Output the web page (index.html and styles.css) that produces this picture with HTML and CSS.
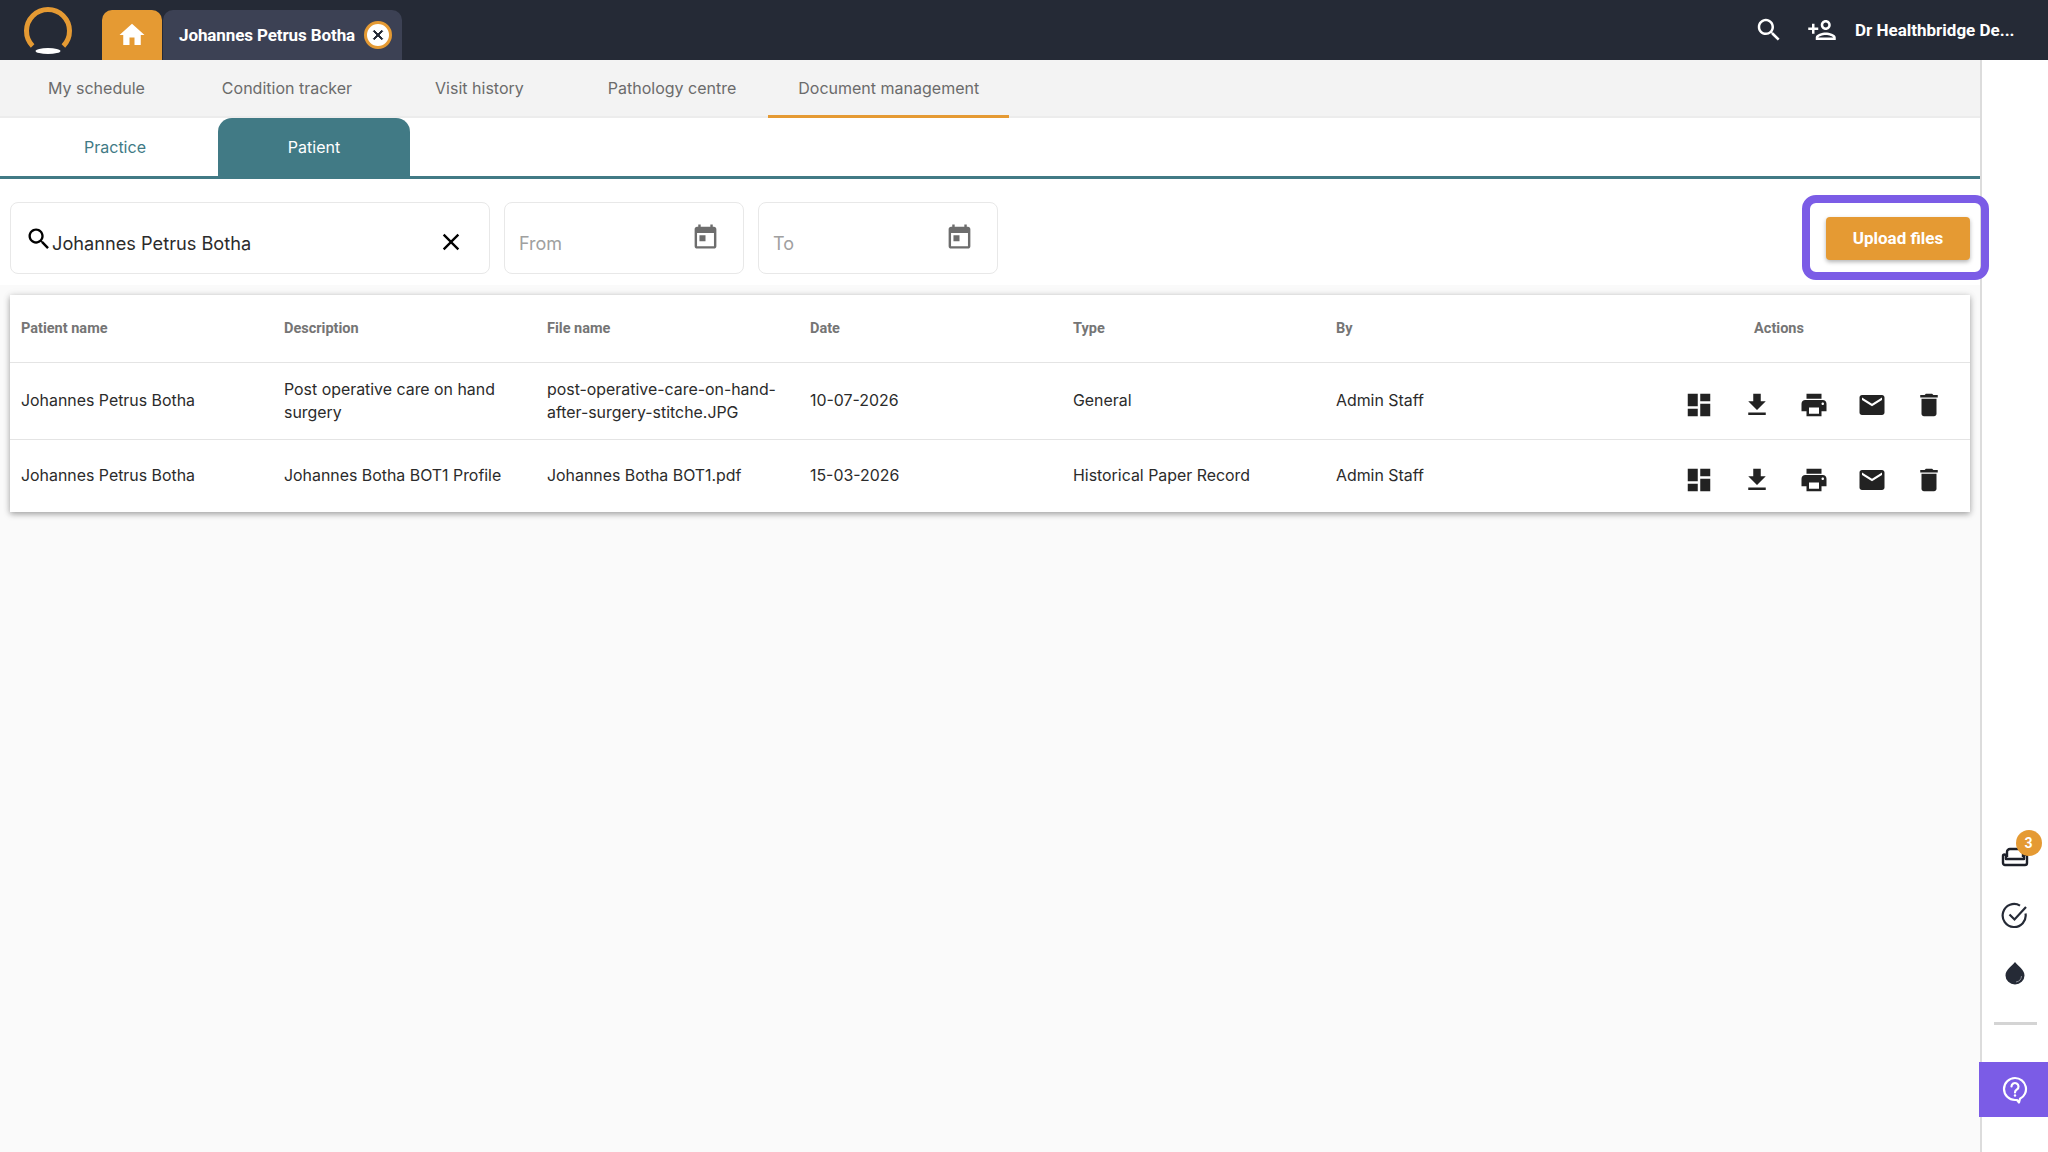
FILE: index.html

```html
<!DOCTYPE html>
<html lang="en">
<head>
    <meta charset="UTF-8">
    <title>Document management</title>
    <link rel="stylesheet" href="styles.css">
</head>
<body>
    <header class="topbar">
        <svg class="logo" width="56" height="60" viewBox="0 0 56 60">
            <path d="M12.600 46 A21.500 21.500 0 1 1 43.400 46" fill="none" stroke="#e59a33" stroke-width="5"/>
            <ellipse cx="28" cy="51" rx="12.5" ry="3" fill="#fff"/>
        </svg>
        <a class="home-tab" href="#">
            <svg width="30" height="30" viewBox="0 0 24 24"><path d="M10 20v-6h4v6h5v-8h3L12 3 2 12h3v8z"/></svg>
        </a>
        <div class="patient-tab">
            <span>Johannes Petrus Botha</span>
            <span class="patient-close">
                <svg width="16" height="16" viewBox="0 0 24 24"><path d="M19 6.41L17.59 5 12 10.59 6.41 5 5 6.41 10.59 12 5 17.59 6.41 19 12 13.41 17.59 19 19 17.59 13.41 12z"/></svg>
            </span>
        </div>
        <div class="topbar-right">
            <svg width="30" height="30" viewBox="0 0 24 24"><path d="M15.5 14h-.79l-.28-.27C15.41 12.59 16 11.11 16 9.5 16 5.91 13.09 3 9.5 3S3 5.91 3 9.5 5.91 16 9.5 16c1.61 0 3.09-.59 4.23-1.57l.27.28v.79l5 4.99L20.49 19l-4.99-5zm-6 0C7.01 14 5 11.99 5 9.5S7.01 5 9.5 5 14 7.01 14 9.5 11.99 14 9.5 14z"/></svg>
            <svg class="add-person" width="30" height="30" viewBox="0 0 24 24"><path d="M15 12c2.21 0 4-1.79 4-4s-1.79-4-4-4-4 1.79-4 4 1.79 4 4 4zm0-6c1.1 0 2 .9 2 2s-.9 2-2 2-2-.9-2-2 .9-2 2-2zm0 8c-2.67 0-8 1.34-8 4v2h16v-2c0-2.66-5.33-4-8-4zm-6 4c.22-.72 3.31-2 6-2 2.7 0 5.8 1.29 6 2H9zm-3-3v-3h3v-2H6V7H4v3H1v2h3v3h2z"/></svg>
            <span class="user-name">Dr Healthbridge De...</span>
        </div>
    </header>

    <div class="layout">
        <main class="main">
            <nav class="nav-tabs">
                <a href="#">My schedule</a>
                <a href="#">Condition tracker</a>
                <a href="#">Visit history</a>
                <a href="#">Pathology centre</a>
                <a href="#" class="active">Document management</a>
            </nav>

            <div class="sub-tabs">
                <a href="#">Practice</a>
                <a href="#" class="active">Patient</a>
            </div>

            <section class="filters">
                <div class="field field-search">
                    <svg class="field-search-icon" width="28" height="28" viewBox="0 0 24 24"><path d="M15.5 14h-.79l-.28-.27C15.41 12.59 16 11.11 16 9.5 16 5.91 13.09 3 9.5 3S3 5.91 3 9.5 5.91 16 9.5 16c1.61 0 3.09-.59 4.23-1.57l.27.28v.79l5 4.99L20.49 19l-4.99-5zm-6 0C7.01 14 5 11.99 5 9.5S7.01 5 9.5 5 14 7.01 14 9.5 11.99 14 9.5 14z"/></svg>
                    <span class="field-value">Johannes Petrus Botha</span>
                    <svg class="field-clear" width="28" height="28" viewBox="0 0 24 24"><path d="M19 6.41L17.59 5 12 10.59 6.41 5 5 6.41 10.59 12 5 17.59 6.41 19 12 13.41 17.59 19 19 17.59 13.41 12z"/></svg>
                </div>
                <div class="field field-date">
                    <span class="field-placeholder">From</span>
                    <svg class="calendar" width="29" height="29" viewBox="0 0 24 24"><path d="M19 4h-1V2h-2v2H8V2H6v2H5c-1.11 0-2 .9-2 2v14c0 1.1.89 2 2 2h14c1.1 0 2-.9 2-2V6c0-1.1-.9-2-2-2zm0 16H5V9h14v11zM7 11h5v5H7z"/></svg>
                </div>
                <div class="field field-date">
                    <span class="field-placeholder">To</span>
                    <svg class="calendar" width="29" height="29" viewBox="0 0 24 24"><path d="M19 4h-1V2h-2v2H8V2H6v2H5c-1.11 0-2 .9-2 2v14c0 1.1.89 2 2 2h14c1.1 0 2-.9 2-2V6c0-1.1-.9-2-2-2zm0 16H5V9h14v11zM7 11h5v5H7z"/></svg>
                </div>
                <div class="upload-wrap">
                    <button class="upload-button">Upload files</button>
                    <div class="highlight"></div>
                </div>
            </section>

            <section class="content">
                <table class="documents">
                    <thead>
                        <tr>
                            <th>Patient name</th>
                            <th>Description</th>
                            <th>File name</th>
                            <th>Date</th>
                            <th>Type</th>
                            <th>By</th>
                            <th class="actions-head">Actions</th>
                        </tr>
                    </thead>
                    <tbody>
                        <tr class="row-tall">
                            <td>Johannes Petrus Botha</td>
                            <td>Post operative care on hand surgery</td>
                            <td>post-operative-care-on-hand-after-surgery-stitche.JPG</td>
                            <td>10-07-2026</td>
                            <td>General</td>
                            <td>Admin Staff</td>
                            <td>
                                <div class="actions">
                                    <svg viewBox="0 0 24 24"><path d="M3 13h8V3H3v10zm0 8h8v-6H3v6zm10 0h8V11h-8v10zm0-18v6h8V3h-8z"/></svg>
                                    <svg viewBox="0 0 24 24"><path d="M19 9h-4V3H9v6H5l7 7 7-7zM5 18v2h14v-2H5z"/></svg>
                                    <svg viewBox="0 0 24 24"><path d="M19 8H5c-1.66 0-3 1.34-3 3v6h4v4h12v-4h4v-6c0-1.66-1.34-3-3-3zm-3 11H8v-5h8v5zm3-7c-.55 0-1-.45-1-1s.45-1 1-1 1 .45 1 1-.45 1-1 1zm-1-9H6v4h12V3z"/></svg>
                                    <svg viewBox="0 0 24 24"><path d="M20 4H4c-1.1 0-1.99.9-1.99 2L2 18c0 1.1.9 2 2 2h16c1.1 0 2-.9 2-2V6c0-1.1-.9-2-2-2zm0 4l-8 5-8-5V6l8 5 8-5v2z"/></svg>
                                    <svg viewBox="0 0 24 24"><path d="M6 19c0 1.1.9 2 2 2h8c1.1 0 2-.9 2-2V7H6v12zM19 4h-3.5l-1-1h-5l-1 1H5v2h14V4z"/></svg>
                                </div>
                            </td>
                        </tr>
                        <tr class="row-short">
                            <td>Johannes Petrus Botha</td>
                            <td>Johannes Botha BOT1 Profile</td>
                            <td>Johannes Botha BOT1.pdf</td>
                            <td>15-03-2026</td>
                            <td>Historical Paper Record</td>
                            <td>Admin Staff</td>
                            <td>
                                <div class="actions">
                                    <svg viewBox="0 0 24 24"><path d="M3 13h8V3H3v10zm0 8h8v-6H3v6zm10 0h8V11h-8v10zm0-18v6h8V3h-8z"/></svg>
                                    <svg viewBox="0 0 24 24"><path d="M19 9h-4V3H9v6H5l7 7 7-7zM5 18v2h14v-2H5z"/></svg>
                                    <svg viewBox="0 0 24 24"><path d="M19 8H5c-1.66 0-3 1.34-3 3v6h4v4h12v-4h4v-6c0-1.66-1.34-3-3-3zm-3 11H8v-5h8v5zm3-7c-.55 0-1-.45-1-1s.45-1 1-1 1 .45 1 1-.45 1-1 1zm-1-9H6v4h12V3z"/></svg>
                                    <svg viewBox="0 0 24 24"><path d="M20 4H4c-1.1 0-1.99.9-1.99 2L2 18c0 1.1.9 2 2 2h16c1.1 0 2-.9 2-2V6c0-1.1-.9-2-2-2zm0 4l-8 5-8-5V6l8 5 8-5v2z"/></svg>
                                    <svg viewBox="0 0 24 24"><path d="M6 19c0 1.1.9 2 2 2h8c1.1 0 2-.9 2-2V7H6v12zM19 4h-3.5l-1-1h-5l-1 1H5v2h14V4z"/></svg>
                                </div>
                            </td>
                        </tr>
                    </tbody>
                </table>
            </section>
        </main>

        <aside class="rail">
            <div class="rail-item rail-inbox">
                <svg width="28" height="20" viewBox="0 0 28 20" fill="none" stroke="#1d2029" stroke-width="2.4" stroke-linejoin="round">
                    <path d="M6 10V5a3 3 0 0 1 3-3h10a3 3 0 0 1 3 3v5"/>
                    <path d="M2 9a1.500 1.500 0 0 1 3 0v3h18V9a1.500 1.500 0 0 1 3 0v7a2 2 0 0 1-2 2H4a2 2 0 0 1-2-2z"/>
                </svg>
                <span class="rail-badge">3</span>
            </div>
            <div class="rail-item rail-check">
                <svg width="28" height="28" viewBox="0 0 28 28" fill="none" stroke="#252a36" stroke-width="2.2">
                    <path d="M24.500 11.500A11.500 11.500 0 1 1 19 3.600"/>
                    <path d="M8.500 12.500l5 5L25 5"/>
                </svg>
            </div>
            <div class="rail-item rail-drop">
                <svg width="22" height="24" viewBox="0 0 22 24">
                    <path d="M11 1c3 4 9.500 7.500 9.500 13.500a9.500 9 0 0 1-19 0C1.500 8.500 8 5 11 1z" fill="#252a36"/>
                    <path d="M17.500 15a6.500 6.500 0 0 1-5.500 6" fill="none" stroke="#8a8d96" stroke-width="1"/>
                </svg>
            </div>
            <div class="rail-divider"></div>
            <div class="rail-help">
                <svg width="26" height="28" viewBox="0 0 26 28" fill="none" stroke="#fff" stroke-width="2.2">
                    <path d="M13 2a11 11 0 1 0 0 22h2l2 2.500 1-3.700A11 11 0 0 0 13 2z" stroke-linejoin="round"/>
                    <path d="M9.500 10.500a3.500 3.500 0 1 1 5.500 2.900c-1.300.9-2 1.500-2 3.100" stroke-linecap="round"/>
                    <circle cx="13" cy="19.500" r="1.200" fill="#fff" stroke="none"/>
                </svg>
            </div>
        </aside>
    </div>
</body>
</html>
```

FILE: styles.css

```css
:root {
    --dark: #252a36;
    --orange: #e59a33;
    --teal: #417a85;
    --purple: #7b5ce6;
    --line: #e4e4e4;
    --text: #2b2b2b;
}

* {
    box-sizing: border-box;
}

body {
    margin: 0;
    height: 1152px;
    overflow: hidden;
    display: flex;
    flex-direction: column;
    font-family: Inter, "Noto Sans", sans-serif;
    color: var(--text);
    background-color: #fff;
}

a {
    text-decoration: none;
    color: inherit;
}

.topbar {
    height: 60px;
    flex-shrink: 0;
    display: flex;
    align-items: flex-end;
    padding-left: 20px;
    background-color: var(--dark);
    color: #fff;
}

.logo {
    margin-right: 26px;
}

.home-tab {
    width: 60px;
    height: 50px;
    display: flex;
    align-items: center;
    justify-content: center;
    margin-right: 1px;
    border-radius: 10px 10px 0 0;
    background-color: var(--orange);
}

.home-tab svg {
    fill: #fff;
}

.patient-tab {
    width: 239px;
    height: 50px;
    display: flex;
    align-items: center;
    gap: 9px;
    padding-left: 16px;
    border-radius: 10px 10px 0 0;
    background-color: #3c4154;
    font-family: Roboto, sans-serif;
    font-size: 17px;
    font-weight: 700;
    letter-spacing: -0.1px;
}

.patient-close {
    width: 28px;
    height: 28px;
    display: flex;
    align-items: center;
    justify-content: center;
    border: 3px solid var(--orange);
    border-radius: 50%;
    background-color: #fff;
}

.patient-close svg {
    fill: var(--dark);
    stroke: var(--dark);
    stroke-width: 1.5;
}

.topbar-right {
    height: 60px;
    margin-left: auto;
    display: flex;
    align-items: center;
    padding-right: 25px;
}

.topbar-right svg {
    fill: #fff;
}

.add-person {
    margin-left: 23px;
}

.user-name {
    width: 168px;
    margin-left: 18px;
    white-space: nowrap;
    font-family: Roboto, sans-serif;
    font-size: 17px;
    font-weight: 700;
}

.layout {
    flex: 1;
    display: flex;
}

.main {
    width: 1982px;
    display: flex;
    flex-direction: column;
    border-right: 2px solid #dcdcdc;
    background-color: #fafafa;
}

.nav-tabs {
    height: 58px;
    flex-shrink: 0;
    display: flex;
    padding-left: 8px;
    background-color: #f3f3f3;
    border-bottom: 2px solid #ececec;
}

.nav-tabs a {
    height: 58px;
    padding: 0 40px 3px 40px;
    display: flex;
    align-items: center;
    font-size: 16px;
    color: #6b6b6b;
}

.nav-tabs a:nth-child(2) {
    margin-left: -3px;
}

.nav-tabs a:nth-child(3) {
    margin-left: 3px;
}

.nav-tabs a:nth-child(4) {
    margin-left: 4px;
}

.nav-tabs a.active {
    margin-left: -8px;
    padding: 0 30px;
    border-bottom: 3px solid var(--orange);
}

.sub-tabs {
    height: 61px;
    flex-shrink: 0;
    display: flex;
    gap: 7px;
    padding-left: 19px;
    background-color: #fff;
    border-bottom: 3px solid var(--teal);
}

.sub-tabs a {
    width: 192px;
    display: flex;
    align-items: center;
    justify-content: center;
    border-radius: 14px 14px 0 0;
    font-size: 16px;
    color: var(--teal);
}

.sub-tabs a.active {
    background-color: var(--teal);
    color: #fff;
}

.filters {
    flex-shrink: 0;
    display: flex;
    align-items: center;
    gap: 14px;
    padding: 23px 10px 11px 10px;
    background-color: #fff;
}

.field {
    height: 72px;
    display: flex;
    align-items: center;
    border: 1px solid #e8e8e8;
    border-radius: 8px;
    background-color: #fff;
}

.field-search {
    width: 480px;
    padding: 0 24px 0 14px;
}

.field-search-icon {
    margin-top: 2px;
}

.field-value {
    flex: 1;
    padding-top: 10px;
    margin-left: -1px;
    font-size: 18.2px;
}

.field-clear {
    margin-top: 8px;
}

.field-date {
    width: 240px;
    justify-content: space-between;
    padding: 0 23px 0 14px;
}

.field-placeholder {
    padding-top: 10px;
    font-size: 18px;
    color: #a0a0a0;
}

.calendar {
    margin-top: -4px;
    fill: #6d6d6d;
}

.upload-wrap {
    position: relative;
    margin-left: auto;
}

.upload-button {
    display: block;
    width: 144px;
    height: 43px;
    border: none;
    border-radius: 4px;
    background-color: var(--orange);
    box-shadow: 0 2px 4px rgba(0, 0, 0, 0.3);
    font-family: Roboto, sans-serif;
    font-size: 17px;
    font-weight: 700;
    color: #fff;
}

/* annotation drawn round the button */
.highlight {
    position: absolute;
    top: -22px;
    right: -19px;
    bottom: -20px;
    left: -24px;
    border: 8px solid var(--purple);
    border-radius: 14px;
}

.content {
    flex: 1;
    padding: 10px 10px 0 10px;
}

.documents {
    width: 1960px;
    table-layout: fixed;
    border-collapse: collapse;
    background-color: #fff;
    box-shadow: 0 2px 6px rgba(0, 0, 0, 0.35), 0 0 10px rgba(0, 0, 0, 0.05);
}

.documents th {
    width: 263px;
    height: 67px;
    padding: 0 11px;
    text-align: left;
    font-family: Roboto, sans-serif;
    font-size: 14.5px;
    font-weight: 700;
    color: #757575;
}

.documents th.actions-head {
    width: 382px;
    text-align: center;
}

.documents td {
    padding: 0 11px;
    font-size: 15.9px;
    line-height: 23px;
    color: var(--text);
    border-top: 1px solid var(--line);
}

.row-tall td {
    height: 77px;
}

.row-short td {
    height: 73px;
}

.actions {
    display: flex;
    justify-content: flex-end;
    gap: 27.5px;
    padding: 8px 15px 0 0;
}

.actions svg {
    width: 30px;
    height: 30px;
    fill: #222;
}

.rail {
    flex: 1;
    display: flex;
    flex-direction: column;
    align-items: center;
    justify-content: flex-end;
    padding-bottom: 35px;
    background-color: #fff;
}

.rail-item {
    position: relative;
    display: flex;
    justify-content: center;
    left: -1px;
}

.rail-inbox {
    margin-bottom: 35px;
}

.rail-badge {
    position: absolute;
    top: -17px;
    right: -13px;
    width: 26px;
    height: 26px;
    display: flex;
    align-items: center;
    justify-content: center;
    border-radius: 50%;
    background-color: var(--orange);
    font-family: Roboto, sans-serif;
    font-size: 14px;
    font-weight: 700;
    color: #fff;
}

.rail-check {
    margin-bottom: 31px;
}

.rail-drop {
    margin-bottom: 37px;
}

.rail-divider {
    width: 43px;
    height: 3px;
    margin-bottom: 37px;
    background-color: #d4d4d4;
}

.rail-help {
    width: 70px;
    height: 55px;
    margin-left: -3px;
    display: flex;
    align-items: center;
    justify-content: center;
    padding-left: 2px;
    background-color: var(--purple);
}
```
